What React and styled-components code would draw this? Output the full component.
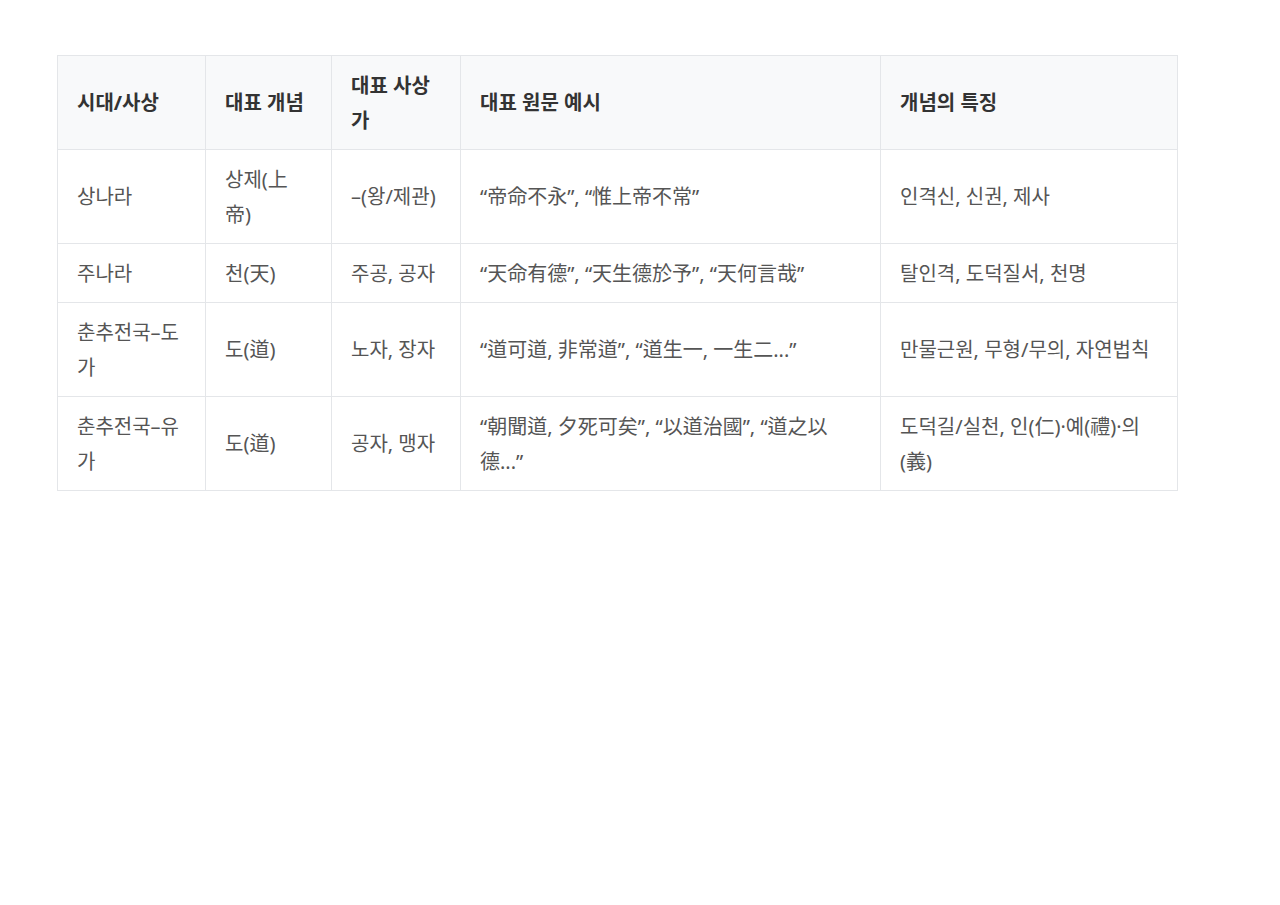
import React from 'react'
import styled, { createGlobalStyle } from 'styled-components'

const Global = createGlobalStyle`
body {
  margin: 0;
  background: #fff;
  font-family: "Noto Sans", "Noto Sans CJK KR", sans-serif;
}
`;

const Page = styled.div`
padding: 55px 0 0 57px;
`;

const Table = styled.table`
border-collapse: collapse;
table-layout: fixed;
width: 1120px;
font-size: 20px;
line-height: 35px;
`;

const Col = styled.col`
width: ${p => p.w}px;
`;

const Th = styled.th`
background: #f8f9fa;
color: #333;
font-weight: 700;
text-align: left;
vertical-align: middle;
padding: 11.5px 19px;
border: 1px solid #e4e6e9;
`;

const Td = styled.td`
color: #555;
text-align: left;
vertical-align: middle;
padding: 11.5px 19px;
border: 1px solid #e4e6e9;
`;

const cols = [148, 126, 129, 420, 297]

const head = ['시대/사상', '대표 개념', '대표 사상가', '대표 원문 예시', '개념의 특징']

const rows = [
  ['상나라', '상제(上帝)', '–(왕/제관)', '“帝命不永”, “惟上帝不常”', '인격신, 신권, 제사'],
  ['주나라', '천(天)', '주공, 공자', '“天命有德”, “天生德於予”, “天何言哉”', '탈인격, 도덕질서, 천명'],
  ['춘추전국–도가', '도(道)', '노자, 장자', '“道可道, 非常道”, “道生一, 一生二...”', '만물근원, 무형/무의, 자연법칙'],
  ['춘추전국–유가', '도(道)', '공자, 맹자', '“朝聞道, 夕死可矣”, “以道治國”, “道之以德...”', '도덕길/실천, 인(仁)·예(禮)·의(義)'],
]

export default function App() {
  return (
    <Page>
      <Global />
      <Table>
        <colgroup>
          {cols.map((w, i) => <Col key={i} w={w} />)}
        </colgroup>
        <thead>
          <tr>
            {head.map(h => <Th key={h}>{h}</Th>)}
          </tr>
        </thead>
        <tbody>
          {rows.map((r, i) => (
            <tr key={i}>
              {r.map((c, j) => <Td key={j}>{c}</Td>)}
            </tr>
          ))}
        </tbody>
      </Table>
    </Page>
  )
}
